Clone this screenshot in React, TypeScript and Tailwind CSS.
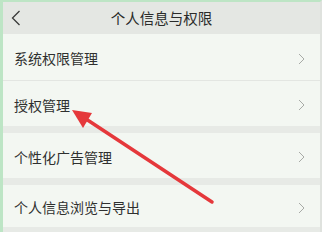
import React from 'react';

const rows = [
  { label: '系统权限管理', h: 'h-[47px]' },
  { label: '授权管理', h: 'h-[45px]' },
];
const rows2 = [
  { label: '个性化广告管理', h: 'h-[45px]' },
];

const Chevron: React.FC = () => (
  <svg width="7" height="12" viewBox="0 0 7 12" className="shrink-0">
    <path d="M1 1 L6 6 L1 11" fill="none" stroke="#a8aba7" strokeWidth="1" />
  </svg>
);

const Row: React.FC<{ label: string; h: string; border?: boolean }> = ({ label, h, border }) => (
  <div
    className={`flex items-center justify-between pl-[11px] pr-[15px] pt-[3px] bg-[#f3f7f2] ${h} ${
      border ? 'border-b border-[#e3e6e2]' : ''
    }`}
  >
    <span className="text-[14px] text-[#2f302f]">{label}</span>
    <Chevron />
  </div>
);

const App: React.FC = () => {
  return (
    <div
      className="relative w-[322px] h-[232px] overflow-hidden bg-[#e7eae6] border-l-[3px] border-t-[2px] border-r-[2px] border-l-[#bde5c5] border-t-[#bde5c5] border-r-[#dfe2de]"
      style={{ fontFamily: '"Noto Sans CJK SC", "Noto Sans", sans-serif' }}
    >
      {/* Header */}
      <div className="relative flex items-center justify-center h-[32px] bg-[#e4e7e3]">
        <svg width="10" height="16" viewBox="0 0 10 16" className="absolute left-[8px] top-[8px]">
          <path d="M8.5 1 L1.5 8 L8.5 15" fill="none" stroke="#3a3b3a" strokeWidth="1.3" />
        </svg>
        <span className="text-[14.5px] text-[#2a2b2a]">个人信息与权限</span>
      </div>

      {rows.map((r, i) => (
        <Row key={r.label} label={r.label} h={r.h} border={i === 0} />
      ))}
      <div className="h-[7px]" />
      {rows2.map((r) => (
        <Row key={r.label} label={r.label} h={r.h} />
      ))}
      <div className="h-[7px]" />
      <Row label="个人信息浏览与导出" h="h-[42px]" />

      {/* Red arrow annotation */}
      <svg className="absolute left-[-3px] top-[-2px]" width="322" height="232" viewBox="0 0 322 232">
        <line x1="212" y1="202" x2="86" y2="119" stroke="#e5383b" strokeWidth="3.5" strokeLinecap="round" />
        <polygon points="72,110 92,113 83,128" fill="#e5383b" />
      </svg>
    </div>
  );
};

export default App;
